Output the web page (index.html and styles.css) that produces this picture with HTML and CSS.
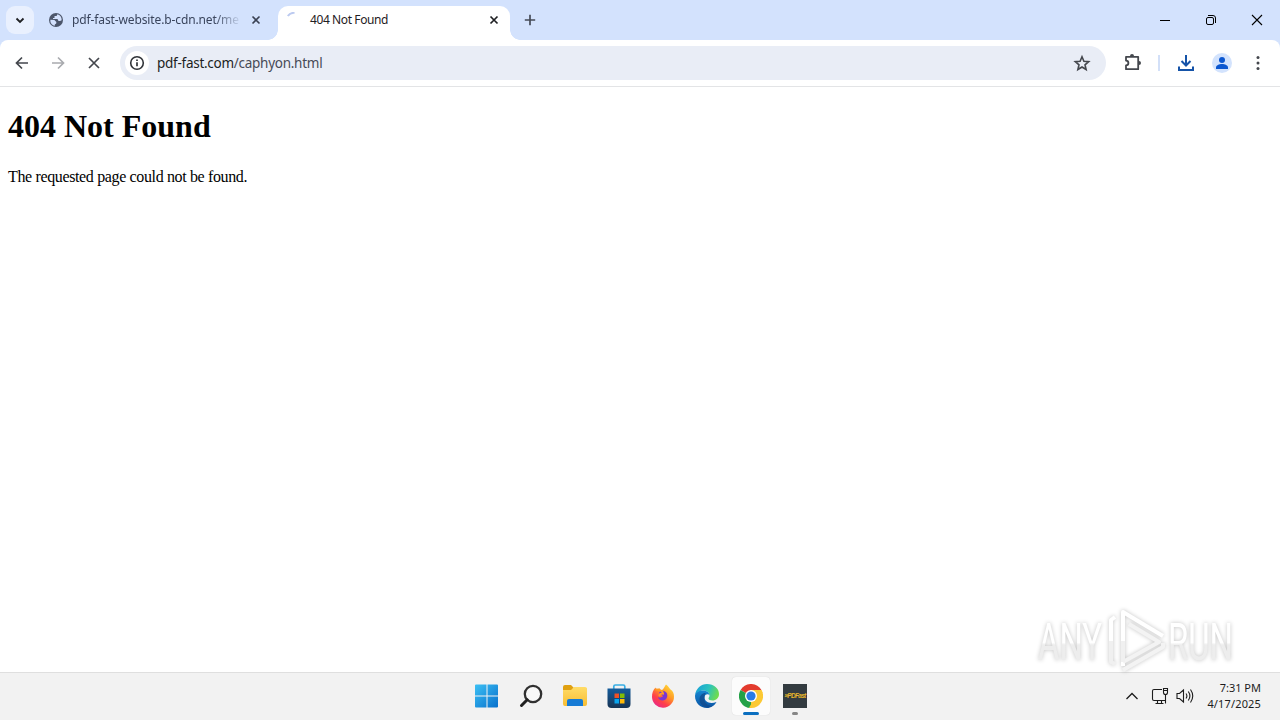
FILE: index.html
```html
<!DOCTYPE html>
<html lang="en">
<head>
  <meta charset="UTF-8">
  <title>404 Not Found</title>
  <link rel="stylesheet" href="styles.css">
</head>
<body>
  <div class="tabstrip">
    <button class="tab-search">
      <svg width="28" height="28" viewBox="0 0 28 28"><path d="M10.5 12.5l3.5 3.5 3.5-3.5" fill="none" stroke="#1f2023" stroke-width="1.8"/></svg>
    </button>
    <div class="tab">
      <svg class="favicon" width="16" height="16" viewBox="0 0 16 16">
        <circle cx="8" cy="8" r="7" fill="#4c566b"/>
        <path d="M2.4 7.800l4 .2 2 2-.2 1.600-1.400.8v1.400C4 13.400 2 11 2.400 7.800zM9.400 2.200L8.600 4H6.500v2H5v1h4.500l1 2H12l1.700-.7C13.800 5 12 2.900 9.400 2.200z" fill="#d3e1fd"/>
      </svg>
      <span class="tab-title">pdf-fast-website.b-cdn.net/me</span>
      <svg class="tab-close" width="16" height="16" viewBox="0 0 16 16"><path d="M4.500 4.500l7 7M11.500 4.500l-7 7" stroke="#3a4254" stroke-width="1.600"/></svg>
    </div>
    <div class="tab active">
      <svg class="favicon" width="16" height="16" viewBox="0 0 16 16"><path d="M1.800 4A7.400 7.400 0 0 1 8.500 .9" fill="none" stroke="#bccaf0" stroke-width="2"/></svg>
      <span class="tab-title">404 Not Found</span>
      <svg class="tab-close" width="16" height="16" viewBox="0 0 16 16"><path d="M4.500 4.500l7 7M11.500 4.500l-7 7" stroke="#1f2023" stroke-width="1.700"/></svg>
    </div>
    <button class="new-tab">
      <svg width="28" height="28" viewBox="0 0 28 28"><path d="M14 8.800v10.400M8.800 14h10.400" stroke="#454b57" stroke-width="1.700"/></svg>
    </button>
    <div class="window-buttons">
      <svg width="46" height="40" viewBox="0 0 46 40"><path d="M18 20.500h10" stroke="#000"/></svg>
      <svg width="46" height="40" viewBox="0 0 46 40" fill="none" stroke="#000"><rect x="18.500" y="17.500" width="7" height="7" rx="1.500"/><path d="M20 15.500h5a2.500 2.500 0 0 1 2.500 2.500v5"/></svg>
      <svg width="46" height="40" viewBox="0 0 46 40"><path d="M18 15l10 10M28 15l-10 10" stroke="#000" stroke-width="1.100"/></svg>
    </div>
  </div>

  <div class="toolbar">
    <div class="nav">
      <svg width="36" height="36" viewBox="0 0 36 36" fill="none" stroke="#44474d" stroke-width="1.700"><path d="M24 18H13M18 12.500L12.500 18l5.500 5.500"/></svg>
      <svg width="36" height="36" viewBox="0 0 36 36" fill="none" stroke="#a9abaf" stroke-width="1.700"><path d="M12 18h11M18 12.500l5.500 5.500-5.500 5.500"/></svg>
      <svg width="36" height="36" viewBox="0 0 36 36" fill="none" stroke="#44474d" stroke-width="1.700"><path d="M13 13l10 10M23 13L13 23"/></svg>
    </div>
    <div class="omnibox">
      <span class="site-info">
        <svg width="16" height="16" viewBox="0 0 16 16"><circle cx="8" cy="8" r="6.300" fill="none" stroke="#303338" stroke-width="1.600"/><path d="M8 7.300v4M8 4.400v1.600" stroke="#303338" stroke-width="1.700"/></svg>
      </span>
      <span class="url"><b>pdf-fast.com</b>/caphyon.html</span>
      <svg class="star" width="18" height="18" viewBox="0 0 18 18"><path d="M9 2.700l1.900 4.500 4.800.4-3.700 3.200 1.100 4.700L9 13l-4.100 2.500L6 10.800 2.300 7.600l4.800-.4z" fill="none" stroke="#44474d" stroke-width="1.600"/></svg>
    </div>
    <div class="actions">
      <svg width="36" height="36" viewBox="0 0 36 36"><path d="M12 11.800h12.200v12.400H12v-3.800a2.400 2.400 0 0 0 0-4.800v-3.800z" fill="none" stroke="#44474d" stroke-width="1.800" stroke-linejoin="round"/><path d="M16 11a2 2 0 0 1 4 0zM25 16a2 2 0 0 1 0 4z" fill="#44474d"/></svg>
      <span class="separator"></span>
      <svg width="36" height="36" viewBox="0 0 36 36" fill="none" stroke="#1553a8" stroke-width="2"><path d="M18 10v10M13.500 16l4.500 4.500 4.500-4.500M11 21.500V25h14v-3.500"/></svg>
      <svg width="36" height="36" viewBox="0 0 36 36"><circle cx="18" cy="18" r="10" fill="#d3e3fd"/><circle cx="18" cy="15" r="3" fill="#0b57d0"/><path d="M12 24v-1.500c0-2.300 3-3.500 6-3.500s6 1.200 6 3.500V24z" fill="#0b57d0"/></svg>
      <svg width="36" height="36" viewBox="0 0 36 36" fill="#44474d"><circle cx="18" cy="12.500" r="1.500"/><circle cx="18" cy="18" r="1.500"/><circle cx="18" cy="23.500" r="1.500"/></svg>
    </div>
  </div>

  <main class="page">
    <h1>404 Not Found</h1>
    <p>The requested page could not be found.</p>
  </main>

  <div class="taskbar">
    <div class="apps">
      <span class="app">
        <svg width="24" height="24" viewBox="0 0 24 24">
          <defs><linearGradient id="win" x1="0" y1="0" x2="1" y2="1"><stop offset="0" stop-color="#3cc0f4"/><stop offset="1" stop-color="#0870cc"/></linearGradient></defs>
          <path d="M1 .5h10.500v11H0v-10a1 1 0 0 1 1-1zM12.500 .5H22a1 1 0 0 1 1 1v10H12.500zM0 12.500h11.500v11H1a1 1 0 0 1-1-1zM12.500 12.500H23v10a1 1 0 0 1-1 1h-9.500z" fill="url(#win)"/>
        </svg>
      </span>
      <span class="app">
        <svg width="24" height="24" viewBox="0 0 24 24" fill="none"><circle cx="14" cy="10" r="8.200" fill="#f8f8f8" stroke="#303030" stroke-width="2.300"/><path d="M8.200 15.800L2.500 21.500" stroke="#202020" stroke-width="3" stroke-linecap="round"/></svg>
      </span>
      <span class="app">
        <svg width="26" height="24" viewBox="0 0 26 24">
          <defs><linearGradient id="fold" x1="0" y1="0" x2="0" y2="1"><stop offset="0" stop-color="#ffdc67"/><stop offset="1" stop-color="#f8bd33"/></linearGradient></defs>
          <path d="M1 3a2 2 0 0 1 2-2h6l3 3h11a2 2 0 0 1 2 2v8H1z" fill="#e0a010"/>
          <path d="M1 6h8l3-3h11a2 2 0 0 1 2 2v15a2 2 0 0 1-2 2H3a2 2 0 0 1-2-2z" fill="url(#fold)"/>
          <path d="M5 22v-5a2 2 0 0 1 2-2h12a2 2 0 0 1 2 2v5z" fill="#167bd5"/>
        </svg>
      </span>
      <span class="app">
        <svg width="24" height="26" viewBox="0 0 24 26">
          <defs><linearGradient id="store" x1="0" y1="0" x2="0" y2="1"><stop offset="0" stop-color="#145c9c"/><stop offset="1" stop-color="#173454"/></linearGradient></defs>
          <path d="M6.800 7V3.500a1.500 1.500 0 0 1 1.500-1.500h8a1.500 1.500 0 0 1 1.500 1.500V7" fill="none" stroke="#38aee4" stroke-width="1.700"/>
          <path d="M.5 5.500h23V21a4 4 0 0 1-4 4h-15a4 4 0 0 1-4-4z" fill="url(#store)"/>
          <path d="M7.500 10.500H12V15H7.500z" fill="#ef5025"/><path d="M13 10.500h4.500V15H13z" fill="#80bc06"/><path d="M7.500 16H12v4.500H7.500z" fill="#08a5ee"/><path d="M13 16h4.500v4.500H13z" fill="#ffba08"/>
        </svg>
      </span>
      <span class="app">
        <svg width="24" height="24" viewBox="0 0 24 24">
          <defs>
            <linearGradient id="ff" x1=".9" y1="0" x2=".2" y2="1"><stop offset="0" stop-color="#ffe53d"/><stop offset=".4" stop-color="#ff9a27"/><stop offset=".7" stop-color="#ff4048"/><stop offset="1" stop-color="#e52790"/></linearGradient>
          </defs>
          <path d="M15 .5c3 2 3.300 4 4.500 5 2.500 1.500 3.500 4 3.500 7a11 11 0 0 1-22 .5C1 9 2 6 4.500 3.500L5.500 6 8.500 4l.5 2.500c3 0 4-3 6-6z" fill="url(#ff)"/>
          <path d="M8 9c1-2 4-3 6-1.500 3 1.500 3 6 .5 8-3 2-7 .5-7.500-2.500 2 1 4 .5 5-1z" fill="#7a35d5"/>
          <path d="M4.500 5.500C8 5 12 7 12 9.500 9 9 9 11 8 12" fill="none" stroke="#ff9c23" stroke-width="2"/>
        </svg>
      </span>
      <span class="app">
        <svg width="24" height="24" viewBox="0 0 24 24">
          <defs>
            <linearGradient id="edge1" x1="0" y1=".2" x2="1" y2=".5"><stop offset="0" stop-color="#179fd9"/><stop offset=".55" stop-color="#2bc3bd"/><stop offset="1" stop-color="#70dc4c"/></linearGradient>
            <linearGradient id="edge2" x1="0" y1="0" x2="0" y2="1"><stop offset="0" stop-color="#1686d1"/><stop offset="1" stop-color="#0b55a5"/></linearGradient>
          </defs>
          <path d="M0 11C1 4.500 6 0 12 0c7 0 12 4.500 12 10 0 4-3 6.500-6.500 6.500-2.500 0-4-1-4-2s1-1.500 1-3C14.500 9 12 6.500 8.500 6.500 4.500 6.500 1 9 0 11z" fill="url(#edge1)"/>
          <path d="M0 12c0-3.500 4-5.500 8.500-5.500 3.500 0 6 2.500 6 5-1-2-5-1.500-5 2 0 4 5 7 12 4.500C19.500 21.500 16 24 12 24 5 24 0 18.500 0 12z" fill="url(#edge2)"/>
          <path d="M9.500 13.500c-1 4.500 3 8.500 8 8.200-5 4-13 .3-13-6.200C4.500 11 8 8.500 11 9c-1 .8-1.500 2.500-1.500 4.500z" fill="#134a8b" opacity=".75"/>
        </svg>
      </span>
      <span class="app open current">
        <svg width="24" height="24" viewBox="0 0 24 24">
          <path d="M12 12L1.600 6A12 12 0 0 1 22.400 6z" fill="#e33b2e"/>
          <path d="M12 12V24A12 12 0 0 1 1.600 6z" fill="#24a148"/>
          <path d="M12 12L22.400 6A12 12 0 0 1 12 24z" fill="#fcc934"/>
          <path d="M12 6h10.400a12 12 0 0 1 1.200 3H12zM16.900 14.500L12 24l-2-.2 4-7z" fill="#fcc934"/>
          <circle cx="12" cy="12" r="6" fill="#fff"/><circle cx="12" cy="12" r="4.600" fill="#297be6"/>
        </svg>
      </span>
      <span class="app open">
        <span class="pdf-app">»PDFast</span>
      </span>
    </div>
    <div class="tray">
      <svg class="chevron" width="14" height="10" viewBox="0 0 14 10"><path d="M1.500 8L7 2.500 12.500 8" fill="none" stroke="#1c1c1c" stroke-width="1.300"/></svg>
      <svg class="network" width="18" height="18" viewBox="0 0 18 18" fill="none" stroke="#1c1c1c" stroke-width="1.100"><path d="M11 2.500H3A1.500 1.500 0 0 0 1.500 4v8A1.500 1.500 0 0 0 3 13.500h11M6.500 13.500v3M10.500 13.500v3M4.500 16.500h8M14.500 7.500v9"/><path d="M12.500 1.500h4v4a2 2 0 0 1-4 0zM12.500 3.500h4"/></svg>
      <svg class="sound" width="18" height="16" viewBox="0 0 18 16" fill="none" stroke="#1c1c1c" stroke-width="1.100"><path d="M1 5.500h2.500L7.500 2v12L3.500 10.500H1zM10 5.500q1.800 2.500 0 5M12.300 3.500q3.200 4.500 0 9M14.500 1.500q4.500 6.500 0 13"/></svg>
      <div class="clock">
        <div>7:31 PM</div>
        <div class="date">4/17/2025</div>
      </div>
    </div>
  </div>

  <svg class="watermark" width="220" height="76" viewBox="0 0 220 76">
    <defs>
      <linearGradient id="mark" x1="0" y1="0" x2="0" y2="1"><stop offset=".5" stop-color="#fff"/><stop offset=".54" stop-color="#ededed"/></linearGradient>
    </defs>
    <g class="mark-text">
      <text x="9" y="56" textLength="64" lengthAdjust="spacingAndGlyphs">ANY</text>
      <text x="139" y="56" textLength="65" lengthAdjust="spacingAndGlyphs">RUN</text>
    </g>
    <g fill="none" stroke-linejoin="round">
      <path d="M82 58V16l4-3M94 62V8l40 24" stroke="#fff" stroke-width="4"/>
      <path d="M100 20l30 18-36 20M94 66l40-23v-4" stroke="#f3f3f3" stroke-width="4"/>
      <path d="M82 37v21l4 2M94 37v21" stroke="#f0f0f0" stroke-width="4"/>
    </g>
  </svg>
</body>
</html>
```
FILE: styles.css
```css
* {
  box-sizing: border-box;
}
body {
  margin: 0;
  height: 720px;
  overflow: hidden;
  display: flex;
  flex-direction: column;
  background: #d3e2fd;
  font-family: "Noto Sans", sans-serif;
}
svg {
  display: block;
  flex: none;
}
button {
  padding: 0;
  border: none;
  background: none;
}

/* tabs */
.tabstrip {
  height: 40px;
  display: flex;
  align-items: flex-start;
  padding: 6px 0 0 6px;
}
.tab-search {
  width: 28px;
  height: 28px;
  border-radius: 9px;
  background: #e9f0fe;
}
.tab {
  width: 232px;
  height: 34px;
  display: flex;
  align-items: center;
  padding: 0 8px 6px;
  margin: 0 6px;
  color: #39445c;
}
.tab.active {
  position: relative;
  margin: 0;
  background: #fff;
  border-radius: 10px 10px 0 0;
  color: #1f2023;
}
.tab.active::before,
.tab.active::after {
  content: "";
  position: absolute;
  bottom: 0;
  width: 10px;
  height: 10px;
}
.tab.active::before {
  left: -10px;
  background: radial-gradient(circle at 0 0, transparent 9.5px, #fff 10px);
}
.tab.active::after {
  right: -10px;
  background: radial-gradient(circle at 100% 0, transparent 9.5px, #fff 10px);
}
.tab-title {
  width: 168px;
  margin-left: 8px;
  white-space: nowrap;
  font-size: 12px;
  line-height: 20px;
  letter-spacing: -0.12px;
}
.tab:not(.active) .tab-title {
  mask-image: linear-gradient(to right, #000 142px, transparent 170px);
}
.tab.active .tab-title {
  letter-spacing: -0.4px;
}
.tab-close {
  margin-left: 8px;
}
.new-tab {
  margin-left: 6px;
}
.window-buttons {
  display: flex;
  margin: -6px 0 0 auto;
}

/* toolbar */
.toolbar {
  height: 47px;
  display: flex;
  align-items: center;
  padding: 0 4px;
  background: #fff;
  border-bottom: 1px solid #e3e4e6;
  border-radius: 8px 8px 0 0;
}
.nav {
  display: flex;
}
.omnibox {
  width: 986px;
  height: 34px;
  margin-left: 8px;
  padding: 0 15px 0 5px;
  display: flex;
  align-items: center;
  border-radius: 17px;
  background: #e9edf6;
}
.site-info {
  width: 24px;
  height: 24px;
  display: grid;
  place-items: center;
  border-radius: 50%;
  background: #fff;
}
.url {
  margin-left: 8px;
  font-size: 13.5px;
  letter-spacing: -0.27px;
  color: #474b57;
}
.url b {
  font-weight: 400;
  color: #1c1e22;
}
.star {
  margin-left: auto;
}
.actions {
  display: flex;
  align-items: center;
  margin-left: 8px;
}
.separator {
  width: 2px;
  height: 16px;
  margin: 0 8px;
  background: #d3e0f8;
}

/* page content */
.page {
  flex: 1;
  padding: 0 8px;
  background: #fff;
  color: #000;
  font-family: "Liberation Serif", serif;
  font-size: 16px;
}
.page h1 {
  margin: 21px 0;
  font-size: 32px;
  line-height: 37px;
}
.page p {
  margin: 22px 0 0;
  line-height: 20px;
  letter-spacing: -0.36px;
}

/* taskbar */
.taskbar {
  position: relative;
  height: 48px;
  display: flex;
  justify-content: center;
  padding-bottom: 2px;
  background: #f2f2f2;
  border-top: 1px solid #dfdfdf;
}
.apps {
  display: flex;
  align-items: center;
  gap: 4px;
  margin-left: 2px;
}
.app {
  position: relative;
  width: 40px;
  height: 40px;
  display: grid;
  place-items: center;
}
.app.current {
  width: 38px;
  height: 38px;
  margin: 0 1px;
  border-radius: 4px;
  background: #fcfcfc;
  box-shadow: 0 0 1px #ccc;
}
.app.open::after {
  content: "";
  position: absolute;
  bottom: 1px;
  left: 17px;
  width: 6px;
  height: 3px;
  border-radius: 2px;
  background: #868686;
}
.app.current::after {
  bottom: 0;
  left: 11px;
  width: 16px;
  background: #0b6fc0;
}
.pdf-app {
  width: 24px;
  height: 24px;
  background: #333b40;
  color: #e5b62c;
  font: italic bold 6.5px/24px "Liberation Sans", sans-serif;
  text-align: center;
  letter-spacing: -0.7px;
}
.tray {
  position: absolute;
  right: 19px;
  top: 0;
  height: 46px;
  display: flex;
  align-items: center;
}
.network {
  margin-left: 12px;
}
.sound {
  margin-left: 7px;
}
.clock {
  width: 58px;
  margin-left: 9px;
  font-size: 11px;
  line-height: 16px;
  text-align: right;
  white-space: nowrap;
  color: #1c1c1c;
}
.date {
  letter-spacing: 0.15px;
}

/* watermark */
.watermark {
  position: absolute;
  left: 1029px;
  top: 604px;
  filter: drop-shadow(0 0 2px rgba(0, 0, 0, 0.24));
}
.mark-text {
  font: 400 51px Roboto, sans-serif;
  fill: url(#mark);
}
```
